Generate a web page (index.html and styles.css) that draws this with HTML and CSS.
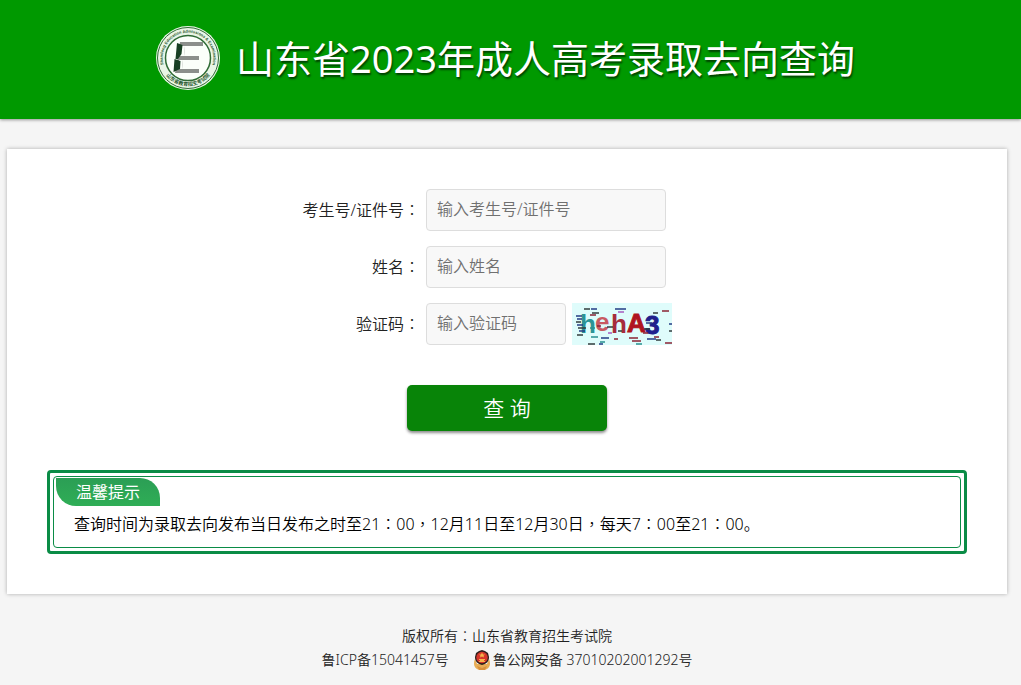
FILE: index.html
```html
<!DOCTYPE html>
<html lang="zh-CN">
<head>
<meta charset="utf-8">
<meta name="viewport" content="width=device-width, initial-scale=1">
<title>山东省2023年成人高考录取去向查询</title>
<link rel="stylesheet" href="styles.css">
</head>
<body>
<header class="header">
  <svg class="logo" viewBox="0 0 64 64" role="img" aria-label="山东省教育招生考试院">
    <defs>
      <path id="ring-top" d="M10.100 44.600A25.300 25.300 0 1 1 53.900 44.600"/>
      <path id="ring-bottom" d="M7 44.500A28 28 0 0 0 57 44.500"/>
    </defs>
    <circle cx="32" cy="32" r="32" fill="#e9f5e6"/>
    <circle cx="32" cy="32" r="30.500" fill="none" stroke="#2f6b35" stroke-width="1"/>
    <circle cx="32" cy="32" r="22.500" fill="#fbfffa" stroke="#2f6b35" stroke-width="1.500"/>
    <text class="logo-latin"><textPath href="#ring-top" startOffset="50%" text-anchor="middle">Shandong Education Admissions &amp; Examination</textPath></text>
    <text class="logo-cjk"><textPath href="#ring-bottom" startOffset="50%" text-anchor="middle">山东省教育招生考试院</textPath></text>
    <path fill="#8b8f8b" d="M24 16H47V20H29L28 30H43V34H27L26 43H43V47H19L20 42Z"/>
    <path fill="#fbfffa" d="M24 20H29L28 30H24ZM23 34H27L26 43H22Z"/>
    <path fill="#173f22" d="M21 17L26.500 19L25.500 28L22 33H19.500ZM18.500 33L24.500 35L24 43L17.500 46Z"/>
  </svg>
  <h1 class="title">山东省2023年成人高考录取去向查询</h1>
</header>
<main class="card">
  <form class="form">
    <label class="label" for="num">考生号/证件号<span class="mid" lang="zh-TW">：</span></label>
    <div class="field"><input class="input" id="num" type="text" placeholder="输入考生号/证件号"></div>
    <label class="label" for="name">姓名<span class="mid" lang="zh-TW">：</span></label>
    <div class="field"><input class="input" id="name" type="text" placeholder="输入姓名"></div>
    <label class="label" for="code">验证码<span class="mid" lang="zh-TW">：</span></label>
    <div class="field">
      <input class="input input-code" id="code" type="text" placeholder="输入验证码">
      <svg class="captcha" viewBox="0 0 100 42" role="img" aria-label="验证码图片">
        <rect width="100" height="42" fill="#dffcfb"/>
        <g class="captcha-text">
          <text x="8" y="30" fill="#2b9495">h</text>
          <text x="23" y="28" fill="#c85a62">e</text>
          <text x="39" y="30" fill="#a62c3c">h</text>
          <text x="55" y="29" fill="#b01420" stroke="#b01420">A</text>
          <text x="73" y="31" fill="#20208c" stroke="#20208c">3</text>
        </g>
        <g fill="none" stroke-width="1.500">
          <path stroke="#333c3e" d="M12 6h6M20 10h7M4 19h5M6 25h8M5 32h6M16 41h7M35 24h6M46 28h4M72 26h6M84 37h5M97 28h3M81 10h5"/>
          <path stroke="#243d85" d="M19 6h6M4 13h6M5 16h5M5 22h6M7 28h6M43 6h11M29 35h8M27 41h4M75 36h9M97 21h3M74 20h6"/>
          <path stroke="#8b2335" d="M18 12h6M25 23h4M42 36h4M57 35h9M60 38h9M90 8h7M93 40h7M71 30h5M82 34h5"/>
          <path stroke="#a75cc0" d="M46 9h6M36 30h4"/>
          <path stroke="#289090" d="M19 34h7M18 25h5M28 39h5M64 41h6"/>
        </g>
      </svg>
    </div>
    <button class="submit" type="button">查 询</button>
  </form>
  <section class="notice">
    <div class="notice-inner">
      <h2 class="notice-title">温馨提示</h2>
      <p class="notice-text">查询时间为录取去向发布当日发布之时至21<span class="mid" lang="zh-TW">：</span>00<span class="mid" lang="zh-TW">，</span>12月11日至12月30日<span class="mid" lang="zh-TW">，</span>每天7<span class="mid" lang="zh-TW">：</span>00至21<span class="mid" lang="zh-TW">：</span>00。</p>
    </div>
  </section>
</main>
<footer class="footer">
  <div>版权所有<span class="mid" lang="zh-TW">：</span>山东省教育招生考试院</div>
  <div class="records">
    <a class="link" href="#">鲁ICP备15041457号</a>
    <a class="link police" href="#">
      <svg class="badge" viewBox="0 0 18 20" aria-hidden="true">
        <path fill="#e8ad55" d="M2 9C-1 16 3 20 9 20S19 16 16 9L14 14H4Z"/>
        <path fill="#d9903c" d="M4 16L9 18L14 16L12 20H6Z"/>
        <path fill="#30201c" d="M9 0L12 1L15 3L16 7C16 12 13 14 9 15C5 14 2 12 2 7L3 3L6 1Z"/>
        <circle cx="9" cy="7.500" r="5.700" fill="#d7372b"/>
        <path fill="#f6b54a" d="M9 2.500L10 4.500H12L10.500 5.800L11 7.500L9 6.500L7 7.500L7.500 5.800L6 4.500H8ZM6 9H12V10H11V11H12V12H6V11H7V10H6Z"/>
      </svg>鲁公网安备 37010202001292号</a>
  </div>
</footer>
</body>
</html>
```
FILE: styles.css
```css
* {
  box-sizing: border-box;
}

body {
  margin: 0;
  background: #f5f5f5;
  color: #222;
  font: 350 16px/24px "Noto Sans", "Noto Sans CJK SC", sans-serif;
}

.mid {
  font-family: "Noto Sans CJK TC", sans-serif;
  font-weight: 300;
  line-height: 1;
}

.header {
  display: flex;
  align-items: center;
  justify-content: center;
  gap: 16px;
  min-height: 119px;
  padding: 0 10px 3px 0;
  background: #090;
  box-shadow: 0 1px 3px rgba(0, 0, 0, .4);
}

.logo {
  width: 64px;
  height: 64px;
}

.logo-latin {
  font: bold 4px "Liberation Sans", sans-serif;
  fill: #27572d;
}

.logo-cjk {
  font: bold 5px "Noto Sans CJK SC", sans-serif;
  fill: #27572d;
}

.title {
  margin: 0;
  color: #fff;
  font-size: 38px;
  font-weight: 400;
  line-height: 56px;
  text-shadow: 1px 2px 2px rgba(0, 0, 0, .6);
}

.card {
  max-width: 1000px;
  margin: 30px 14px 0 7px;
  padding: 40px;
  background: #fff;
  box-shadow: 0 0 4px rgba(0, 0, 0, .3);
}

.form {
  display: grid;
  grid-template-columns: 379px 1fr;
  row-gap: 15px;
  align-items: center;
}

.label {
  padding-right: 6px;
  text-align: right;
}

.field {
  display: flex;
  gap: 6px;
}

.input {
  width: 240px;
  height: 42px;
  padding: 0 10px 2px;
  border: 1px solid #ddd;
  border-radius: 4px;
  background: #f8f8f8;
  color: #333;
  font: inherit;
}

.input::placeholder {
  color: #707070;
  opacity: 1;
}

.input-code {
  width: 140px;
}

.captcha {
  width: 100px;
  height: 42px;
}

.captcha-text {
  font: bold 26px "Liberation Sans", sans-serif;
}

.submit {
  grid-column: 1 / -1;
  justify-self: center;
  width: 200px;
  height: 46px;
  margin-top: 25px;
  padding: 0;
  border: 0;
  border-radius: 5px;
  background: #088408;
  box-shadow: 0 2px 3px rgba(0, 0, 0, .45);
  color: #fff;
  font: 350 21px/46px "Noto Sans", "Noto Sans CJK SC", sans-serif;
}

.notice {
  margin-top: 39px;
  padding: 3px;
  border: 3px solid #0a8c46;
  border-radius: 4px;
}

.notice-inner {
  padding: 1px 2px 11px;
  border: 1px solid #0a8c46;
  border-radius: 4px;
}

.notice-title {
  width: 104px;
  margin: 0;
  border-radius: 0 20px 0 20px;
  background: linear-gradient(#2b9e55, #2fae56);
  color: #fff;
  font-size: 16px;
  font-weight: 400;
  line-height: 28px;
  text-align: center;
}

.notice-text {
  margin: 0;
  padding: 6px 18px 0;
  color: #000;
}

.footer {
  padding: 30px 7px 0 0;
  font-size: 14px;
  text-align: center;
}

.records {
  display: flex;
  justify-content: center;
  gap: 24px;
}

.link {
  color: inherit;
  text-decoration: none;
}

.police {
  display: flex;
  align-items: center;
  gap: 2px;
}

.badge {
  width: 18px;
  height: 20px;
}
```
